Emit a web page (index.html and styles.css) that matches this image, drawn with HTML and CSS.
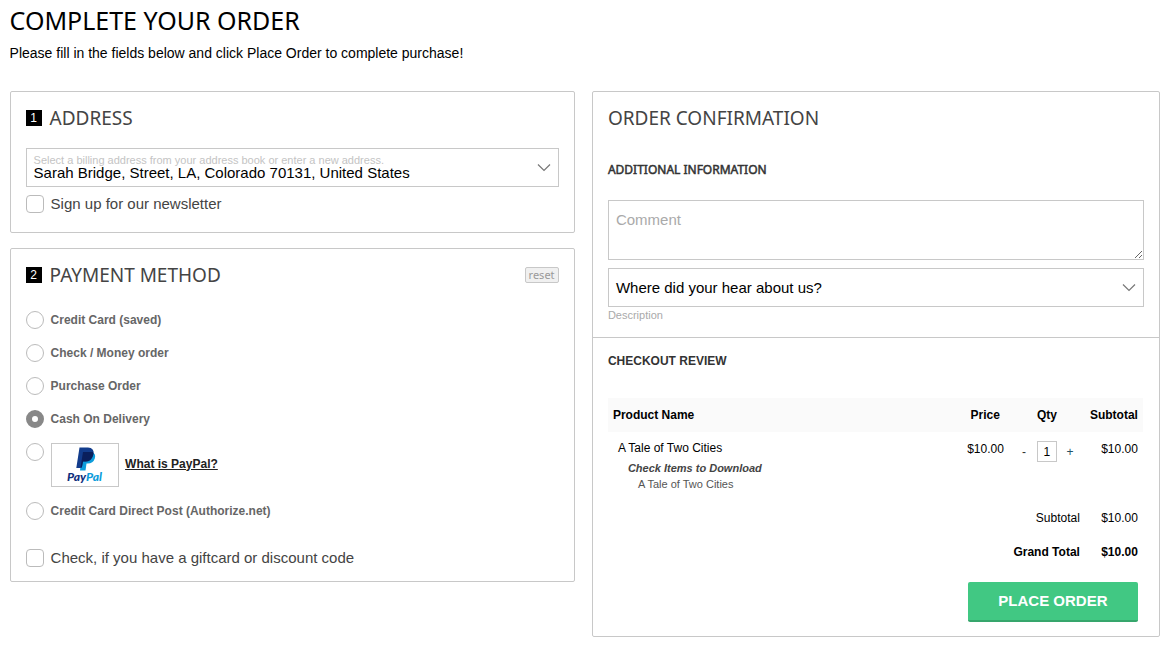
FILE: index.html
```html
<!DOCTYPE html>
<html lang="en">
<head>
<meta charset="utf-8">
<title>Complete your order</title>
<link rel="stylesheet" href="styles.css">
</head>
<body>
<main class="checkout">
  <h1 class="page-title"><span>COMPLETE YOUR ORDER</span></h1>
  <p class="intro"><span>Please fill in the fields below and click Place Order to complete purchase!</span></p>
  <div class="columns">
    <div class="left">
      <section class="panel address">
        <h2 class="heading"><span class="step">1</span><span>ADDRESS</span></h2>
        <div class="select select-address">
          <div class="select-text">
            <span class="hint">Select a billing address from your address book or enter a new address.</span>
            <span class="value">Sarah Bridge, Street, LA, Colorado 70131, United States</span>
          </div>
          <svg class="chevron" width="14" height="9" viewBox="0 0 14 9"><path d="M1 1.5 7 7.5 13 1.5"/></svg>
        </div>
        <div class="check-row"><span class="checkbox"></span><span class="check-label">Sign up for our newsletter</span></div>
      </section>
      <section class="panel payment">
        <div class="payment-head">
          <h2 class="heading"><span class="step">2</span><span>PAYMENT METHOD</span></h2>
          <button class="reset">reset</button>
        </div>
        <div class="methods">
          <div class="method"><span class="radio"></span><span>Credit Card (saved)</span></div>
          <div class="method"><span class="radio"></span><span>Check / Money order</span></div>
          <div class="method"><span class="radio"></span><span>Purchase Order</span></div>
          <div class="method"><span class="radio radio-on"></span><span>Cash On Delivery</span></div>
          <div class="method method-paypal">
            <span class="radio"></span>
            <span class="paypal-box">
              <svg width="66" height="42" viewBox="0 0 66 42">
                <path fill="#0d9ddb" d="M30 8H39Q44.500 9 42.800 14.500Q41.200 19.500 35.500 19.500H34.500L33.500 26.500H28Z"/>
                <path fill="#123c8c" d="M27.500 3.500H36Q42.500 4 41.500 10Q40.200 17.500 33.500 17.500H31L29.800 24H24.300Z"/>
                <path fill="#0a1f5c" d="M31 8H40.500Q42 8.200 41 11.500Q39 17.500 33.500 17.500H31L29.900 23H28.600Z"/>
                <text class="logo-text" x="15" y="37" textLength="35" lengthAdjust="spacingAndGlyphs"><tspan fill="#10307e">Pay</tspan><tspan fill="#0d9ddb">Pal</tspan></text>
              </svg>
            </span>
            <a class="what">What is PayPal?</a>
          </div>
          <div class="method"><span class="radio"></span><span>Credit Card Direct Post (Authorize.net)</span></div>
        </div>
        <div class="check-row giftcard"><span class="checkbox"></span><span class="check-label">Check, if you have a giftcard or discount code</span></div>
      </section>
    </div>
    <section class="panel confirmation">
      <div class="extra">
        <h2 class="heading"><span>ORDER CONFIRMATION</span></h2>
        <h3 class="sub sub-info"><span>ADDITIONAL INFORMATION</span></h3>
        <textarea class="comment" placeholder="Comment"></textarea>
        <div class="select">
          <span class="value">Where did your hear about us?</span>
          <svg class="chevron" width="14" height="9" viewBox="0 0 14 9"><path d="M1 1.5 7 7.5 13 1.5"/></svg>
        </div>
        <div class="description">Description</div>
      </div>
      <div class="review">
        <h3 class="sub"><span>CHECKOUT REVIEW</span></h3>
        <div class="grid grid-head"><span>Product Name</span><span class="price-head">Price</span><span class="qty-head">Qty</span><span class="num">Subtotal</span></div>
        <div class="grid grid-item">
          <div class="product">
            <div class="name">A Tale of Two Cities</div>
            <div class="download">Check Items to Download</div>
            <div class="file">A Tale of Two Cities</div>
          </div>
          <span class="num price">$10.00</span>
          <div class="qty"><span class="minus">-</span><span class="qty-box">1</span><span class="plus">+</span></div>
          <span class="num price">$10.00</span>
        </div>
        <div class="total"><span>Subtotal</span><span class="amount">$10.00</span></div>
        <div class="total grand"><span>Grand Total</span><span class="amount">$10.00</span></div>
        <button class="place">PLACE ORDER</button>
      </div>
    </section>
  </div>
</main>
</body>
</html>
```
FILE: styles.css
```css
* { box-sizing: border-box; }
body { margin: 0; background: #fff; color: #000; font-family: "Liberation Sans", Arial, sans-serif; font-size: 12px; }
h1, h2, h3, p { margin: 0; font-weight: 400; }
.checkout { padding: 0 9.6px; }
.page-title { height: 42px; font: 25px/40px "Noto Sans", sans-serif; }
.intro { height: 49px; font-size: 14px; line-height: 22px; }
.columns { display: grid; grid-template-columns: 565px 568px; gap: 17.3px; align-items: start; }
.left { display: grid; gap: 15px; }
.panel { border: 1px solid #c8c8c8; border-radius: 2px; }
.address { height: 142px; padding: 15px; }
.payment { height: 334px; padding: 15px; }
.heading { display: flex; align-items: center; gap: 8px; height: 22px; color: #444; font: 19px/22px "Noto Sans", sans-serif; }
.step { width: 16px; height: 16px; background: #000; color: #fff; font: 12px/16px "Liberation Sans", Arial, sans-serif; text-align: center; }
.select { display: flex; align-items: center; justify-content: space-between; height: 39px; padding: 0 7px; border: 1px solid #c8c8c8; }
.select-address { margin-top: 19px; }
.select-text { display: flex; flex-direction: column; }
.hint { height: 11px; color: #c4c4c4; font-size: 11px; line-height: 12px; }
.value { font-size: 15px; line-height: 16px; }
.chevron { fill: none; stroke: #777; stroke-width: 1.2; }
.check-row { display: flex; align-items: center; gap: 7px; height: 18px; margin-top: 8px; color: #444; font-size: 15px; }
.check-label { line-height: 18px; }
.checkbox { width: 18px; height: 18px; border: 1px solid #bbb; border-radius: 4px; }
.payment-head { display: flex; justify-content: space-between; align-items: center; height: 22px; }
.reset { width: 34px; height: 16px; padding: 0; border: 1px solid #c8c8c8; border-radius: 2px; background: #f0f0f0; color: #999; font: 11px/12px "Noto Sans", sans-serif; }
.methods { display: grid; gap: 15px; margin-top: 25px; color: #666; font-weight: 700; }
.method { display: flex; align-items: center; gap: 7px; height: 18px; }
.radio { flex: none; width: 18px; height: 18px; border: 1px solid #bbb; border-radius: 50%; }
.radio-on { border: 6px solid #888; }
.method-paypal { align-items: flex-start; height: 44px; }
.paypal-box { width: 68px; height: 44px; border: 1px solid #c8c8c8; }
.paypal-box svg { display: block; }
.logo-text { font: italic 900 11px Lato, sans-serif; }
.what { align-self: center; margin: -3px 0 0 -.5px; color: #222; text-decoration: underline; }
.giftcard { margin-top: 29px; }
.confirmation { height: 546px; }
.extra { height: 246px; padding: 15px; border-bottom: 1px solid #c8c8c8; }
.sub { color: #333; font: 700 12px/16px "Liberation Sans", Arial, sans-serif; }
.sub-info { margin: 33px 0 22px; font: 400 12px/16px "Noto Sans", sans-serif; -webkit-text-stroke: .5px #333; }
.comment { display: block; width: 100%; height: 60px; margin: 0 0 8px; padding: 10px 7px; border: 1px solid #c8c8c8; font: 15px/18px "Liberation Sans", Arial, sans-serif; }
.comment::placeholder { color: #aaa; }
.description { color: #aaa; font-size: 11px; line-height: 16px; }
.review { display: flex; flex-direction: column; padding: 15px 15px 0; }
.grid { display: grid; grid-template-columns: 341px 50px 70px 64px; width: 535px; }
.grid-head { height: 34px; margin-top: 29px; padding-left: 5px; background: #fafafa; font-weight: 700; line-height: 34px; }
.num { text-align: right; }
.price-head { text-align: right; padding-right: 4px; }
.qty-head { padding-left: 33px; }
.grid-item { height: 69px; padding-left: 5px; }
.product { padding: 8px 0 0 5px; }
.name { line-height: 16px; }
.download { padding: 4px 0 0 10px; color: #444; font-size: 11px; font-style: italic; font-weight: 700; line-height: 16px; }
.file { padding-left: 20px; color: #555; font-size: 11px; line-height: 16px; }
.price { padding-top: 9px; line-height: 16px; }
.qty { display: flex; align-items: center; height: 21px; margin: 9px 0 0 18px; }
.minus, .plus { line-height: 21px; padding-top: 2px; }
.minus { width: 15px; color: #333; }
.plus { margin-left: 9.5px; color: #245268; }
.qty-box { width: 20px; height: 21px; border: 1px solid #c8c8c8; font-size: 12px; line-height: 21px; text-align: center; }
.total { display: flex; justify-content: flex-end; height: 34px; padding-right: 6px; line-height: 34px; }
.amount { width: 58px; text-align: right; }
.grand { font-weight: 700; }
.place { align-self: flex-end; width: 170px; height: 40px; margin: 13px 6px 0 0; padding: 0; border: 0; border-bottom: 2px solid #36a66c; border-radius: 2px; background: #41c883; color: #fff; font: 700 15px/38px "Liberation Sans", Arial, sans-serif; }
```
